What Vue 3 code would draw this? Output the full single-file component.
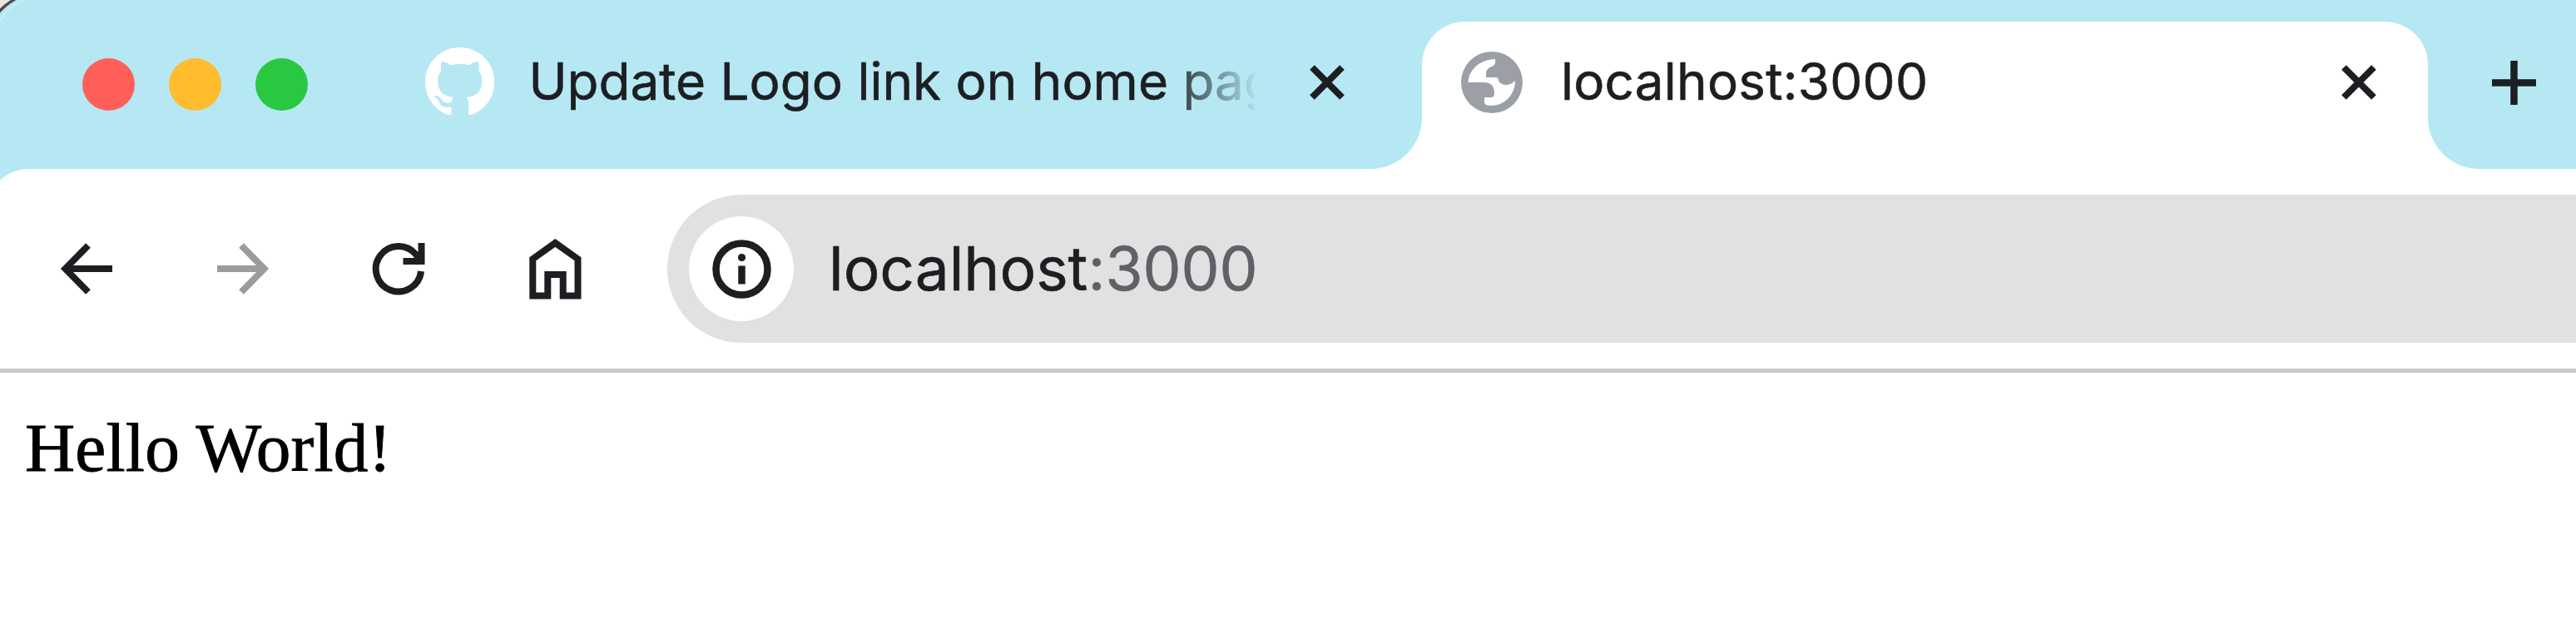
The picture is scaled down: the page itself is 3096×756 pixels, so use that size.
<script setup>
const lights = ['red', 'yellow', 'green']
</script>

<template>
  <div class="browser">
    <svg class="corner" width="34" height="34" viewBox="0 0 34 34">
      <path d="M0 0H18Q7 5 0 14Z" fill="#e9e6dd" />
      <path d="M18 -1Q7 5 -1 14" fill="none" stroke="#4c4c4c" stroke-width="3.5" />
      <path d="M30 0Q8 7 0 26" fill="none" stroke="#c9eef5" stroke-width="2" />
    </svg>
    <header class="strip">
      <div class="lights"><i v-for="l in lights" :key="l" :class="l"></i></div>
      <div class="tab">
        <svg class="github" viewBox="0 0 16 16"><path fill="#fff" d="M8 0C3.58 0 0 3.58 0 8c0 3.54 2.29 6.53 5.47 7.59.4.07.55-.17.55-.38 0-.19-.01-.82-.01-1.49-2.01.37-2.53-.49-2.69-.94-.09-.23-.48-.94-.82-1.13-.28-.15-.68-.52-.01-.53.63-.01 1.08.58 1.23.82.72 1.21 1.87.87 2.33.66.07-.52.28-.87.51-1.07-1.78-.2-3.64-.89-3.64-3.95 0-.87.31-1.59.82-2.15-.08-.2-.36-1.02.08-2.12 0 0 .67-.21 2.2.82.64-.18 1.32-.27 2-.27s1.36.09 2 .27c1.53-1.04 2.2-.82 2.2-.82.44 1.1.16 1.92.08 2.12.51.56.82 1.27.82 2.15 0 3.07-1.87 3.75-3.65 3.95.29.25.54.73.54 1.48 0 1.07-.01 1.93-.01 2.2 0 .21.15.46.55.38A8.01 8.01 0 0 0 16 8c0-4.42-3.58-8-8-8z" /></svg>
        <span class="title fade">Update Logo link on home page</span>
        <svg class="close" viewBox="0 0 42 42"><path d="M3 3 39 39M39 3 3 39" /></svg>
      </div>
      <div class="tab active">
        <svg class="globe" viewBox="0 0 74 74">
          <circle cx="37" cy="37" r="37" fill="#9aa0a6" />
          <path fill="#fff" d="M8.500 37C9 22 23 9 41 9V13Q41 16 37 18Q30 20 30 27V31H42Q45 31 45 35Q48 40 54 40Q60 40 65 35C65 52 52 65 36 65Q28 65 28 61V55H36Q40 55 40 50Q40 37 27 37Z" />
        </svg>
        <span class="title">localhost:3000</span>
        <svg class="close" viewBox="0 0 42 42"><path d="M3 3 39 39M39 3 3 39" /></svg>
      </div>
      <svg class="plus" viewBox="0 0 53 53"><path d="M26.5 0V53M0 26.5H53" /></svg>
    </header>
    <nav class="toolbar">
      <svg class="icon" viewBox="0 0 74 74"><path d="M68 37H12M39 9 11.5 37 39 65" /></svg>
      <svg class="icon dim" viewBox="0 0 74 74"><path d="M6 37H62M35 9 62.5 37 35 65" /></svg>
      <svg class="icon" viewBox="0 0 74 74"><path d="M64 40A27.200 27.200 0 1 1 58 20L64 27M64.500 6V28H42.500" /></svg>
      <svg class="icon" viewBox="0 0 74 74"><path d="M10.300 69.500V25.300L37.300 6 64.500 25.300V69.500H46.700V44H28.300V69.500Z" /></svg>
      <div class="omnibox">
        <div class="info">
          <svg viewBox="0 0 71 71"><circle cx="35.5" cy="35.5" r="31" /><path d="M35.5 31.500V53.500" /><circle class="dot" cx="35.5" cy="21.500" r="4.600" /></svg>
        </div>
        <span class="url">localhost<em>:3000</em></span>
      </div>
    </nav>
    <main class="page">Hello World!</main>
  </div>
</template>

<style>
html, body { margin: 0; background: #fff; }
</style>
<style scoped>
.browser { position: relative; width: 3096px; height: 756px; overflow: hidden; background: #fff; font-family: Inter, "Liberation Sans", sans-serif; color: #1d1e22; }
.corner { position: absolute; left: 0; top: 0; }
.strip { display: flex; box-sizing: border-box; height: 203px; padding-left: 99px; background: #b5e8f3; }
.lights { display: flex; gap: 41px; width: 412px; padding-top: 70px; box-sizing: border-box; }
.lights i { width: 63px; height: 63px; border-radius: 50%; }
.red { background: #ff5f58; }
.yellow { background: #ffbc2f; }
.green { background: #29c840; }
.tab { display: flex; align-items: center; width: 1198px; height: 146px; margin-top: 26px; }
.github { width: 83.4px; height: 83.4px; margin-right: 41px; flex: none; }
.title { position: relative; top: -1px; font-size: 62px; line-height: 80px; letter-spacing: 0.2px; white-space: nowrap; -webkit-text-stroke: 0.6px currentColor; }
.fade { width: 873px; margin-right: 66px; letter-spacing: 0; overflow: hidden; -webkit-mask-image: linear-gradient(90deg, #000 765px, transparent 878px); mask-image: linear-gradient(90deg, #000 765px, transparent 878px); }
.close { width: 42px; height: 42px; flex: none; fill: none; stroke: #1d1e22; stroke-width: 8; }
.active { position: relative; width: 1209px; height: 177px; padding: 0 62px 31px 47px; box-sizing: border-box; background: #fff; border-radius: 52px 52px 0 0; }
.active::before, .active::after { content: ""; position: absolute; bottom: 0; width: 62px; height: 62px; }
.active::before { left: -62px; background: radial-gradient(circle at 0 0, transparent 61.5px, #fff 62.5px); }
.active::after { right: -62px; background: radial-gradient(circle at 100% 0, transparent 61.5px, #fff 62.5px); }
.globe { width: 74px; height: 74px; margin-right: 46px; flex: none; }
.active .close { margin-left: auto; }
.plus { width: 53px; height: 53px; margin: 73px 0 0 77px; flex: none; fill: none; stroke: #1d1e22; stroke-width: 8.5; }
.toolbar { display: flex; align-items: center; box-sizing: border-box; height: 245px; padding: 0 0 0 67px; border-bottom: 5px solid #c9cac9; background: radial-gradient(circle at 35px 52px, #fff 51.5px, #b5e8f3 52.5px) 0 0 / 35px 52px no-repeat; }
.icon { width: 74px; height: 74px; margin-right: 113.5px; flex: none; fill: none; stroke: #1d1e22; stroke-width: 8; }
.dim { stroke: #9b9b9b; }
.omnibox { display: flex; align-items: center; flex: 1; height: 178px; margin-left: -15px; border-radius: 89px 0 0 89px; background: #e1e1e1; }
.info { display: flex; align-items: center; justify-content: center; width: 126px; height: 126px; margin: 0 42px 0 26px; border-radius: 50%; background: #fff; }
.info svg { width: 71px; height: 71px; fill: none; stroke: #1d1e22; stroke-width: 8.5; }
.info .dot { fill: #1d1e22; stroke: none; }
.url { font-size: 73px; line-height: 90px; letter-spacing: -0.05px; -webkit-text-stroke: 0.6px currentColor; }
.url em { font-style: normal; color: #5f6167; }
.page { padding: 42px 30px; font: 83.3px/96px "Liberation Serif", serif; letter-spacing: 0.2px; color: #000; -webkit-text-stroke: 0.9px #000; }
</style>
